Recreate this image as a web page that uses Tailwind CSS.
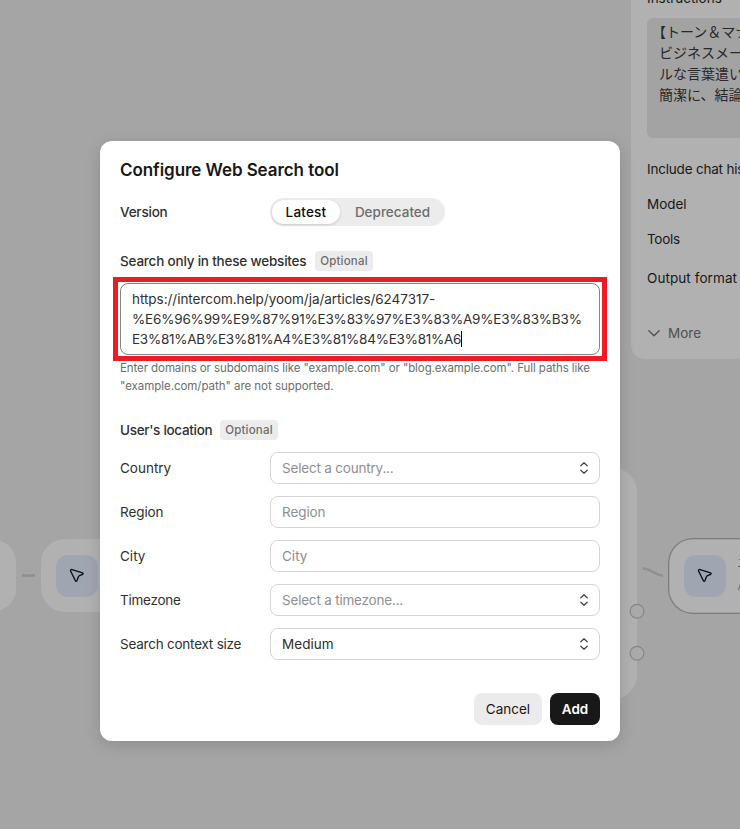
<!DOCTYPE html>
<html lang="en">
<head>
<meta charset="utf-8">
<title>Configure Web Search tool</title>
<script src="https://cdn.jsdelivr.net/npm/@tailwindcss/browser@4"></script>
</head>
<body class="relative h-[829px] w-[740px] overflow-hidden bg-[#a5a5a5] font-['Inter','Noto_Sans_CJK_JP',sans-serif] text-[13.5px] leading-5 text-[#303030]">

<!-- Workflow canvas -->
<div class="absolute inset-0 overflow-hidden" aria-hidden="true">
  <div class="absolute -left-20 top-[540px] h-[71px] w-24 rounded-[22px] bg-[#b1b1b1]"></div>
  <div class="absolute left-[41px] top-[539px] flex h-[73px] w-40 items-center rounded-[24px] bg-[#b1b1b1] pl-[15px]">
    <div class="flex size-[42px] items-center justify-center rounded-[12px] bg-[#9fa5b1]">
      <svg class="size-4" viewBox="0 0 16 16" fill="none" stroke="#101010" stroke-width="1.4" stroke-linejoin="round"><path d="M3.1 1.6 13.5 4.9c.8.3.8 1.1.1 1.4L10.1 7.9c-.3.1-.5.3-.6.6L7.9 12.8c-.3.7-1.2.7-1.5 0L1.6 3c-.4-.9.5-1.7 1.5-1.4Z"/></svg>
    </div>
  </div>
  <div class="absolute left-[540px] top-[468px] h-[231px] w-[97px] rounded-[24px] bg-[#b1b1b1]"></div>
  <div class="absolute left-[667.5px] top-[538px] flex h-[76px] w-60 items-center gap-[12px] rounded-[25px] bg-[#b1b1b1] pl-4 ring-[1.3px] ring-inset ring-[#7c7c7c]">
    <div class="-mt-px flex size-[42px] items-center justify-center rounded-[12px] bg-[#9fa5b1]">
      <svg class="size-4" viewBox="0 0 16 16" fill="none" stroke="#101010" stroke-width="1.4" stroke-linejoin="round"><path d="M3.1 1.6 13.5 4.9c.8.3.8 1.1.1 1.4L10.1 7.9c-.3.1-.5.3-.6.6L7.9 12.8c-.3.7-1.2.7-1.5 0L1.6 3c-.4-.9.5-1.7 1.5-1.4Z"/></svg>
    </div>
    <div class="-mt-1 text-[#222]"><div class="text-[13px] leading-[24px]">エ</div><div class="text-[12px] leading-6 text-[#666]">A</div></div>
  </div>
  <svg class="absolute inset-0 h-full w-full" viewBox="0 0 740 829" fill="none" stroke="#8f8f8f">
    <path stroke-width="2.3" d="M22 575.5h13M643 568.5c8 0 12 7 20 7"/>
    <g stroke-width="1.2" fill="#aaaaaa" stroke="#858585"><circle cx="637" cy="611.3" r="6.9"/><circle cx="637" cy="653.3" r="6.9"/></g>
  </svg>
</div>

<!-- Agent settings panel -->
<aside class="absolute left-[631px] -top-10 flex h-[399px] w-[109px] flex-col overflow-hidden whitespace-nowrap rounded-l-[14px] bg-[#b1b1b1] pl-4 pt-7 text-[#181818]">
  <div class="h-[30px]">Instructions</div>
  <div class="h-[120px] rounded-l-md bg-[#a3a3a3] pl-3 pt-[3px] font-['Noto_Sans_CJK_JP',sans-serif] text-[14px] leading-[21px] text-[#282828]"><span class="-ml-[7px]">【</span>トーン＆マナー】<br>ビジネスメール<br>ルな言葉遣い<br>簡潔に、結論</div>
  <div class="mt-[21px] tracking-[-0.2px]">Include chat history</div>
  <div class="mt-[15px] tracking-[-0.05px]">Model</div>
  <div class="mt-[15px] tracking-[-0.3px]">Tools</div>
  <div class="mt-[19px] tracking-[0.08px]">Output format</div>
  <div class="mt-[35px] flex items-center gap-2 text-[#505050]">
    <svg class="ml-px h-4 w-3" viewBox="0 0 12 16" fill="none" stroke="currentColor" stroke-width="1.3" stroke-linecap="round" stroke-linejoin="round"><path d="m.8 5.7 5.2 5 5.2-5"/></svg>
    <span>More</span>
  </div>
</aside>

<!-- Dialog -->
<main class="absolute left-[100px] top-[141px] flex h-[600px] w-[520px] flex-col whitespace-nowrap rounded-xl bg-white px-5 pt-[17px] shadow-[0_4px_16px_rgba(0,0,0,0.15)]">
  <h1 class="text-[17px] font-semibold leading-6 tracking-[-0.07px] text-[#181818]">Configure Web Search tool</h1>
  <div class="mt-4 flex h-7 items-center">
    <span class="w-[150px] font-medium tracking-[-0.2px]">Version</span>
    <div class="flex h-7 items-center rounded-full bg-[#ececec] p-0.5 font-medium">
      <span class="flex h-6 w-[68px] items-center justify-center rounded-full bg-white tracking-[0.2px] text-[#0d0d0d] shadow-[0_1px_3px_rgba(0,0,0,0.15)]">Latest</span>
      <span class="w-[103px] pl-0.5 text-center text-[#6d6d6d]">Deprecated</span>
    </div>
  </div>
  <div class="mt-[25px] flex h-5 items-center">
    <span class="w-[195px] font-medium tracking-[-0.2px]">Search only in these websites</span>
    <span class="flex h-5 w-[58px] items-center justify-center rounded bg-[#ececec] text-[11.5px] font-medium tracking-[0.2px] text-[#6d6d6d]">Optional</span>
  </div>
  <div class="relative mt-3 h-[72px] rounded-lg border border-[#858585] pl-[11px] pt-[5px]">
    <div class="tracking-[-0.04px]">https://intercom.help/yoom/ja/articles/6247317-</div>
    <div class="tracking-[-0.19px]">%E6%96%99%E9%87%91%E3%83%97%E3%83%A9%E3%83%B3%</div>
    <div class="flex items-center"><span class="tracking-[-0.25px]">E3%81%AB%E3%81%A4%E3%81%84%E3%81%A6</span><span class="h-4 w-px bg-black"></span></div>
    <div class="pointer-events-none absolute -left-2 -top-[7px] h-[84px] w-[494px] border-[5px] border-[#ed1c24]"></div>
  </div>
  <p class="mt-1 text-[11.5px] leading-[18px] text-[#6d6d6d]"><span class="tracking-[-0.085px]">Enter domains or subdomains like "example.com" or "blog.example.com". Full paths like</span><br><span class="tracking-[-0.04px]">"example.com/path" are not supported.</span></p>
  <div class="mt-[25px] flex h-5 items-center">
    <span class="w-[100px] font-medium tracking-[-0.3px]">User's location</span>
    <span class="flex h-5 w-[58px] items-center justify-center rounded bg-[#ececec] text-[11.5px] font-medium tracking-[0.2px] text-[#6d6d6d]">Optional</span>
  </div>
  <div class="mt-3 flex flex-col gap-3">
    <div class="flex h-8 items-center"><span class="w-[150px]">Country</span><div class="flex h-8 flex-1 items-center justify-between rounded-lg border border-[#d5d5d5] px-[11px] text-[#8f8f8f]"><span class="tracking-[-0.19px]">Select a country...</span><svg class="h-3 w-2" viewBox="0 0 8 12" fill="none" stroke="#454545" stroke-width="1.3" stroke-linecap="round" stroke-linejoin="round"><path d="M.8 3.8 4 .8l3.2 3M.8 8.2l3.2 3 3.2-3"/></svg></div></div>
    <div class="flex h-8 items-center"><span class="w-[150px] tracking-[-0.08px]">Region</span><div class="flex h-8 flex-1 items-center rounded-lg border border-[#d5d5d5] pl-[11px] text-[#8f8f8f]"><span class="tracking-[-0.08px]">Region</span></div></div>
    <div class="flex h-8 items-center"><span class="w-[150px]">City</span><div class="flex h-8 flex-1 items-center rounded-lg border border-[#d5d5d5] pl-[11px] text-[#8f8f8f]"><span>City</span></div></div>
    <div class="flex h-8 items-center"><span class="w-[150px] tracking-[-0.25px]">Timezone</span><div class="flex h-8 flex-1 items-center justify-between rounded-lg border border-[#d5d5d5] px-[11px] text-[#8f8f8f]"><span class="tracking-[-0.2px]">Select a timezone...</span><svg class="h-3 w-2" viewBox="0 0 8 12" fill="none" stroke="#454545" stroke-width="1.3" stroke-linecap="round" stroke-linejoin="round"><path d="M.8 3.8 4 .8l3.2 3M.8 8.2l3.2 3 3.2-3"/></svg></div></div>
    <div class="flex h-8 items-center"><span class="w-[150px] tracking-[-0.23px]">Search context size</span><div class="flex h-8 flex-1 items-center justify-between rounded-lg border border-[#d5d5d5] px-[11px]"><span class="tracking-[0.05px]">Medium</span><svg class="h-3 w-2" viewBox="0 0 8 12" fill="none" stroke="#454545" stroke-width="1.3" stroke-linecap="round" stroke-linejoin="round"><path d="M.8 3.8 4 .8l3.2 3M.8 8.2l3.2 3 3.2-3"/></svg></div></div>
  </div>
  <div class="mt-[33px] flex justify-end gap-2">
    <button class="h-8 w-[68px] rounded-lg bg-[#ebebeb] text-[#181818]">Cancel</button>
    <button class="h-8 w-[50px] rounded-lg bg-[#181818] font-semibold text-white">Add</button>
  </div>
</main>
</body>
</html>
